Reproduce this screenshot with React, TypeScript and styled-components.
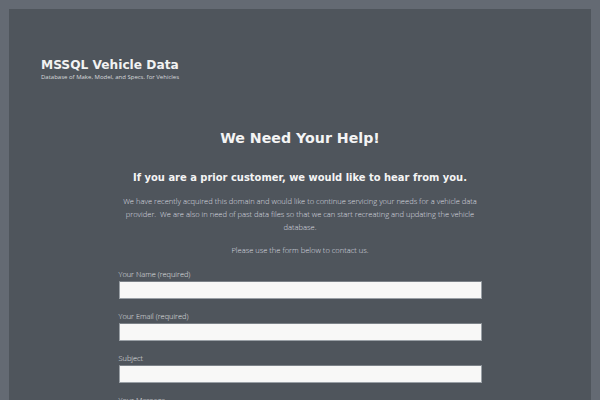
import React from "react";
import styled, { createGlobalStyle } from "styled-components";

const Global = createGlobalStyle`
  html, body { margin: 0; padding: 0; background: #646a73; }
  body { font-family: "DejaVu Sans", "Liberation Sans", sans-serif; color: #ececec; }
  * { box-sizing: border-box; }
`;

const Page = styled.div`
  padding: 9px 9px 0 9px;
  min-height: 400px;
`;

const Panel = styled.div`
  background: #4f555c;
  min-height: 391px;
  padding: 48px 32px 40px 32px;
`;

const Header = styled.header`
  display: flex;
  flex-direction: column;
`;

const SiteTitle = styled.h1`
  margin: 0;
  font-size: 12.2px;
  font-weight: bold;
  color: #f2f2f2;
  line-height: 16px;
`;

const Tagline = styled.p`
  margin: 0;
  font-family: "Open Sans", "Lato", sans-serif;
  font-size: 6px;
  font-weight: 400;
  color: #d8dadc;
  line-height: 9px;
`;

const Content = styled.main`
  width: 363px;
  margin: 45px auto 0 auto;
  display: flex;
  flex-direction: column;
  align-items: stretch;
`;

const Heading = styled.h2`
  margin: 0;
  text-align: center;
  font-size: 14.2px;
  font-weight: bold;
  color: #f4f4f4;
  line-height: 22px;
`;

const SubHeading = styled.h3`
  margin: 21px 0 0 0;
  text-align: center;
  font-size: 9.95px;
  font-weight: bold;
  color: #f4f4f4;
  line-height: 16px;
  white-space: nowrap;
`;

const Para = styled.p<{ $top: number }>`
  margin: ${(p) => p.$top}px 0 0 0;
  text-align: center;
  font-family: "Open Sans", "Lato", sans-serif;
  font-size: 7.55px;
  font-weight: 300;
  color: #dcdee0;
  line-height: 13px;
  white-space: pre-wrap;
`;

const Form = styled.form`
  margin-top: 12.5px;
  display: flex;
  flex-direction: column;
  gap: 12px;
`;

const Field = styled.label`
  display: flex;
  flex-direction: column;
  gap: 2px;
  font-family: "Open Sans", "Lato", sans-serif;
  font-size: 7.4px;
  font-weight: 300;
  color: #e0e2e4;
  line-height: 10px;
`;

const Input = styled.input`
  height: 18px;
  width: 100%;
  background: #f8f8f7;
  border: 1px solid #9aa0a6;
  border-top-color: #7c8288;
  padding: 0 4px;
  font-family: inherit;
  font-size: 8px;
  outline: none;
`;

export default function App() {
  return (
    <>
      <Global />
      <Page>
        <Panel>
          <Header>
            <SiteTitle>MSSQL Vehicle Data</SiteTitle>
            <Tagline>Database of Make, Model, and Specs. for Vehicles</Tagline>
          </Header>
          <Content>
            <Heading>We Need Your Help!</Heading>
            <SubHeading>If you are a prior customer, we would like to hear from you.</SubHeading>
            <Para $top={8.5}>
              We have recently acquired this domain and would like to continue servicing your needs for a vehicle data provider.{"  "}We are also in need of past data files so that we can start recreating and updating the vehicle database.
            </Para>
            <Para $top={10}>Please use the form below to contact us.</Para>
            <Form>
              <Field>
                Your Name (required)
                <Input type="text" />
              </Field>
              <Field>
                Your Email (required)
                <Input type="email" />
              </Field>
              <Field>
                Subject
                <Input type="text" />
              </Field>
              <Field>
                Your Message
                <Input type="text" />
              </Field>
            </Form>
          </Content>
        </Panel>
      </Page>
    </>
  );
}
